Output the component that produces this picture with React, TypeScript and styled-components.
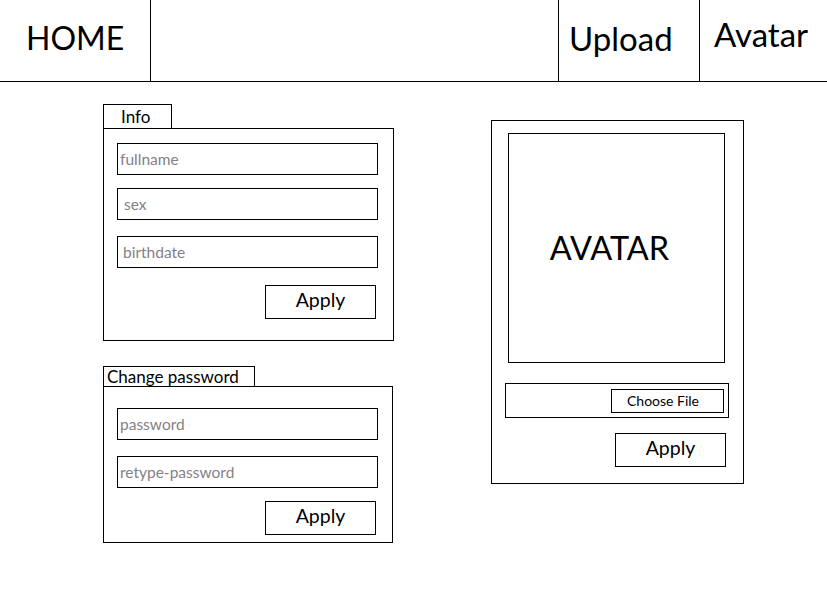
import React from "react";
import styled, { createGlobalStyle } from "styled-components";

const Global = createGlobalStyle`
  * { box-sizing: border-box; }
  html, body { margin: 0; padding: 0; background: #fff; }
  body { font-family: Lato, "Open Sans", sans-serif; color: #000; }
`;

const Header = styled.header`
  display: flex;
  height: 82px;
  border-bottom: 1px solid #000;
`;

const NavCell = styled.div<{ $w: number; $left?: boolean; $right?: boolean; $pl: number; $pt: number; $fs: number }>`
  width: ${(p) => p.$w}px;
  border-left: ${(p) => (p.$left ? "1px solid #000" : "none")};
  border-right: ${(p) => (p.$right ? "1px solid #000" : "none")};
  padding-left: ${(p) => p.$pl}px;
  padding-top: ${(p) => p.$pt}px;
  font-size: ${(p) => p.$fs}px;
  line-height: 1;
  white-space: nowrap;
`;

const Spacer = styled.div`
  flex: 1;
`;

const Main = styled.main`
  display: flex;
  align-items: flex-start;
  padding: 22px 0 0 103px;
`;

const LeftCol = styled.div`
  display: flex;
  flex-direction: column;
  width: 291px;
`;

const Section = styled.section<{ $mt?: number }>`
  display: flex;
  flex-direction: column;
  align-items: flex-start;
  margin-top: ${(p) => p.$mt ?? 0}px;
`;

const Tab = styled.div<{ $w: number; $h: number; $pl: number }>`
  width: ${(p) => p.$w}px;
  height: ${(p) => p.$h}px;
  border: 1px solid #000;
  border-bottom: none;
  padding-left: ${(p) => p.$pl}px;
  font-size: 17px;
  line-height: ${(p) => p.$h - 1}px;
  white-space: nowrap;
`;

const Panel = styled.div<{ $w: number; $h: number; $pt: number }>`
  width: ${(p) => p.$w}px;
  height: ${(p) => p.$h}px;
  border: 1px solid #000;
  padding: ${(p) => p.$pt}px 0 0 13px;
  display: flex;
  flex-direction: column;
  align-items: flex-start;
`;

const Input = styled.input<{ $mt?: number; $pl?: number }>`
  width: 261px;
  height: 32px;
  margin-top: ${(p) => p.$mt ?? 0}px;
  border: 1px solid #000;
  border-radius: 0;
  padding: 0 0 0 ${(p) => p.$pl ?? 2}px;
  font-family: Lato, "Open Sans", sans-serif;
  font-size: 15.5px;
  outline: none;
  background: #fff;
  &::placeholder {
    color: #857f86;
    opacity: 1;
  }
`;

const ApplyButton = styled.button<{ $mt: number; $ml: number }>`
  width: 111px;
  height: 34px;
  margin: ${(p) => p.$mt}px 0 0 ${(p) => p.$ml}px;
  border: 1px solid #000;
  border-radius: 0;
  background: #fff;
  font-family: Lato, "Open Sans", sans-serif;
  font-size: 19.5px;
  color: #000;
  padding: 0 0 4px 0;
  line-height: 1;
`;

const AvatarPanel = styled.div`
  width: 253px;
  height: 364px;
  margin: 16px 0 0 97px;
  border: 1px solid #000;
  padding: 12px 0 0 0;
  display: flex;
  flex-direction: column;
  align-items: flex-start;
`;

const AvatarBox = styled.div`
  width: 217px;
  height: 230px;
  margin-left: 16px;
  border: 1px solid #000;
  display: flex;
  align-items: center;
  justify-content: center;
  font-size: 32.5px;
  padding: 0 14px 2px 0;
`;

const FileRow = styled.div`
  width: 224px;
  height: 35px;
  margin: 20px 0 0 13px;
  border: 1px solid #000;
  display: flex;
  align-items: center;
  justify-content: flex-end;
  padding-right: 4px;
`;

const FileButton = styled.button`
  width: 113px;
  height: 24px;
  border: 1px solid #000;
  border-radius: 0;
  background: #fff;
  font-family: Lato, "Open Sans", sans-serif;
  font-size: 14px;
  color: #000;
  padding: 0 9px 0 0;
`;

export default function App() {
  return (
    <>
      <Global />
      <Header>
        <NavCell $w={151} $right $pl={26} $pt={22} $fs={32}>HOME</NavCell>
        <Spacer />
        <NavCell $w={141} $left $pl={10} $pt={22} $fs={33}>Upload</NavCell>
        <NavCell $w={128} $left $pl={14} $pt={18} $fs={33}>Avatar</NavCell>
      </Header>
      <Main>
        <LeftCol>
          <Section>
            <Tab $w={69} $h={24} $pl={17}>Info</Tab>
            <Panel $w={291} $h={213} $pt={14}>
              <Input placeholder="fullname" $pl={2} />
              <Input placeholder="sex" $mt={13} $pl={6} />
              <Input placeholder="birthdate" $mt={16} $pl={5} />
              <ApplyButton $mt={17} $ml={148}>Apply</ApplyButton>
            </Panel>
          </Section>
          <Section $mt={25}>
            <Tab $w={152} $h={20} $pl={3}>Change password</Tab>
            <Panel $w={290} $h={157} $pt={21}>
              <Input placeholder="password" $pl={2} />
              <Input placeholder="retype-password" $mt={16} $pl={2} />
              <ApplyButton $mt={13} $ml={148}>Apply</ApplyButton>
            </Panel>
          </Section>
        </LeftCol>
        <AvatarPanel>
          <AvatarBox>AVATAR</AvatarBox>
          <FileRow>
            <FileButton>Choose File</FileButton>
          </FileRow>
          <ApplyButton $mt={15} $ml={123}>Apply</ApplyButton>
        </AvatarPanel>
      </Main>
    </>
  );
}
